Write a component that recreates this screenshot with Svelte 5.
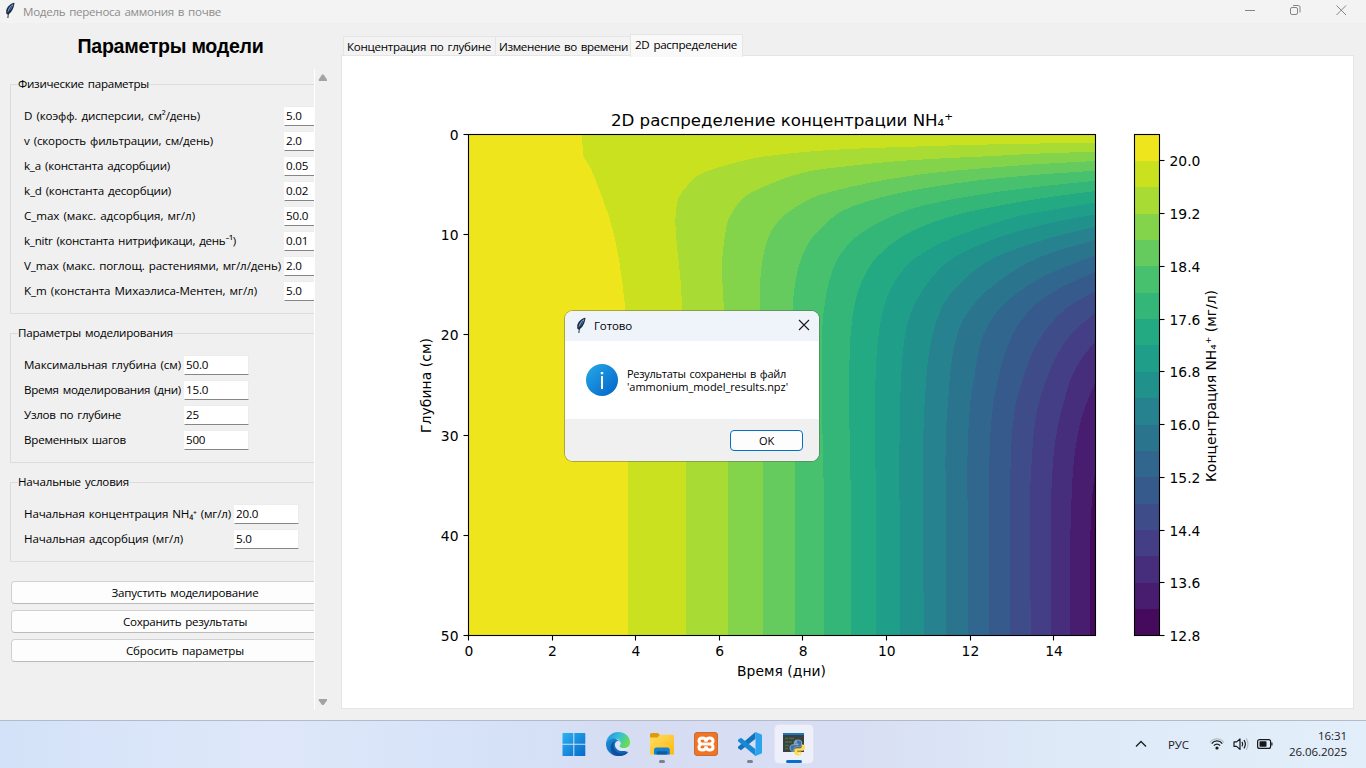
<script>
  // Stretches or tightens letter spacing so a label takes up the given width.
  function fit(node, width) {
    const range = document.createRange();
    range.selectNodeContents(node);
    const w = range.getBoundingClientRect().width;
    const n = node.textContent.trim().length;
    node.style.letterSpacing = (width - w) / n + 'px';
  }

  const groups = [
    {
      title: 'Физические параметры', tw: 131, col: 260,
      rows: [
        ['D (коэфф. дисперсии, см²/день)', '5.0', 176],
        ['v (скорость фильтрации, см/день)', '2.0', 189],
        ['k_a (константа адсорбции)', '0.05', 146],
        ['k_d (константа десорбции)', '0.02', 147],
        ['C_max (макс. адсорбция, мг/л)', '50.0', 171],
        ['k_nitr (константа нитрификаци, день⁻¹)', '0.01', 212],
        ['V_max (макс. поглощ. растениями, мг/л/день)', '2.0', 257],
        ['K_m (константа Михаэлиса-Ментен, мг/л)', '5.0', 233]
      ]
    },
    {
      title: 'Параметры моделирования', tw: 155, col: 160,
      rows: [
        ['Максимальная глубина (см)', '50.0', 157],
        ['Время моделирования (дни)', '15.0', 157],
        ['Узлов по глубине', '25', 97],
        ['Временных шагов', '500', 102]
      ]
    },
    {
      title: 'Начальные условия', tw: 111, col: 210,
      rows: [
        ['Начальная концентрация NH₄⁺ (мг/л)', '20.0', 207],
        ['Начальная адсорбция (мг/л)', '5.0', 159]
      ]
    }
  ];
  const actions = [
    ['Запустить моделирование', 147],
    ['Сохранить результаты', 124],
    ['Сбросить параметры', 118]
  ];
  const tabs = [
    ['Концентрация по глубине', 144, 152],
    ['Изменение во времени', 129, 136],
    ['2D распределение', 102, 113]
  ];

  const colors = ['#efe51c', '#cae11f', '#a8db34', '#84d44b', '#65cb5e', '#48c16e', '#34b679', '#24aa83', '#1f9e89', '#21918c', '#26828e', '#2b748e', '#31678e', '#375a8c', '#3e4c8a', '#433e85', '#472e7c', '#481d6f', '#460a5d'];

  // Iso-lines of concentration, 20.0 down to 13.2 in steps of 0.4.
  const iso = [
    '582,134 583,155.4 590,167 594,176 602,197 609.5,218 615,239 619,260 622,280 624.5,301 626,322 627,364 628,420 628,636',
    '1096,142.7 1040,143.5 967,145 910,146.7 848,149 810,151.5 780,154.5 755,158 736,162.5 715,168.5 697,176 687,186 678.5,198 675.5,218 676.3,239 678.5,260 680.5,280 682,305 684,345 685.5,410 686,636',
    '1096,151.7 1040,153.5 993,156 940,158.5 887,162 845,166.5 813,170.5 793,175.5 780,180 760,188.5 743,198 729,218 724.5,239 722.3,260 722.3,280 724,310 726,360 728,440 728,636',
    '1096,161 1040,164 980,168.5 932,173 890,179 850,187 830,192 813,197.5 796,207 780,219 768,238 762.5,260 760.3,280 760,310 761,370 762.5,450 763,636',
    '1096,170.7 1040,174.5 977,180.5 935,186.5 895,194 865,202 842,211 832,218 812,238 801,259 795.5,281 793,302 792.6,330 793.3,380 795,450 795,636',
    '1096,180.7 1040,186.5 980,194.5 925,205 890,217 856,237 838,258 829.5,280 825,302 822.5,325 821.7,360 822,400 823,460 824,500 824,636',
    '1096,191 1040,198.5 985,208.5 945,218 903,236 876,258 862,281 855,303 851,330 849.5,360 849,400 850,450 851,516 851,636',
    '1096,202.3 1045,211 1013,217.5 952,238 914,259 895,281 885,303 879,331 876,366 875,410 875.3,465 876,480 876,636',
    '1096,214.3 1050,223 997,238 953,258 930,280 915,303 907,325 903,350 901,380 899.7,420 899.5,500 900,636',
    '1096,226.7 1050,238 993,258.5 962,281 944,303 934,329 928,360 925.5,390 923.5,430 923,530 924,636',
    '1096,239.7 1040,257 1000,280 975,303 962,322 955,343 951,365 948.5,395 946,430 945.5,470 946,636',
    '1096,255 1060,269 1035,281 1005,303 989,323 980,345 974,378 970,405 968,440 967,490 968.3,510 968.3,636',
    '1096,271.7 1063,286.5 1037,303 1019,323 1006,350 998,380 993,405 990,440 989,495 989,636',
    '1096,291 1068,307 1047,328 1032,353 1022,382 1015,408 1011,450 1010,510 1010,636',
    '1096,312.3 1073,332 1058,353 1047,378 1037,410 1032,453 1030,510 1030.7,620 1030.7,636',
    '1096,340.7 1082,358 1071,378 1065,398 1058,425 1053,460 1051,510 1051,636',
    '1096,381 1085,407 1078,433 1073,470 1071,515 1070,553 1070,636',
    '1096,466 1092.5,493 1090.7,525 1090,550 1090,636'
  ];

  // Closed region to the right of an iso-line, drawn with a smooth curve.
  function region(src, i) {
    const p = src.split(' ').map((s) => s.split(',').map(Number));
    if (i === 0) return 'M' + p.map((q) => q.join(' ')).join('L') + 'L1096 636L1096 134Z';
    const dir = p.map((_, k) => {
      const a = p[Math.max(0, k - 1)], b = p[Math.min(p.length - 1, k + 1)];
      const l = Math.hypot(b[0] - a[0], b[1] - a[1]);
      return [(b[0] - a[0]) / l, (b[1] - a[1]) / l];
    });
    let d = 'M' + p[0].join(' ');
    for (let k = 1; k < p.length; k++) {
      const a = p[k - 1], b = p[k];
      const l = Math.hypot(b[0] - a[0], b[1] - a[1]) / 3;
      d += `C${a[0] + dir[k - 1][0] * l} ${a[1] + dir[k - 1][1] * l} ${b[0] - dir[k][0] * l} ${b[1] - dir[k][1] * l} ${b[0]} ${b[1]}`;
    }
    return d + 'L1096 636Z';
  }
  const xTicks = [0, 2, 4, 6, 8, 10, 12, 14];
  const yTicks = [0, 10, 20, 30, 40, 50];
  const cTicks = ['12.8', '13.6', '14.4', '15.2', '16.0', '16.8', '17.6', '18.4', '19.2', '20.0'];
  const step = 501 / 19;
</script>

{#snippet feather()}
  <svg class="feather" width="12" height="17" viewBox="0 0 12 17">
    <path d="M10.500 .8C7 1 3.200 4.500 2.300 8.300L2.200 11.500l1.800 1.300C7.400 10.700 9.900 6.400 10.500.8z" fill="#1d2a3d" />
    <path d="M9.300 2C6.800 3 4 6.200 3.500 10.600 6.700 8.400 8.800 5 9.300 2z" fill="#78a5e8" />
    <path d="M7.800 4.200C6 7 4.300 9.500 3.900 16" fill="none" stroke="#1b2a44" stroke-width="1" />
  </svg>
{/snippet}

<div class="screen">
  <header class="titlebar">
    {@render feather()}
    <span class="wtitle"><span use:fit={198}>Модель переноса аммония в почве</span></span>
    <svg class="winctl" width="106" height="20" viewBox="0 0 106 20" fill="none" stroke="#858585">
      <path d="M3 10.5h10" />
      <rect x="48.500" y="7.500" width="7" height="7" rx="1.500" />
      <path d="M51 5.500h5.300q1.700 0 1.700 1.700v5.300" />
      <path d="M94.500 5.500l9.500 9.500M104 5.500l-9.500 9.500" />
    </svg>
  </header>

  <main>
    <aside>
      <h1><span use:fit={186}>Параметры модели</span></h1>
      <div class="scroller">
        <div class="form">
          {#each groups as g}
            <section class="group">
              <div class="legend"><span use:fit={g.tw}>{g.title}</span></div>
              <div class="rows">
                {#each g.rows as [label, value, w]}
                  <div class="row" style="grid-template-columns: {g.col}px 65px">
                    <label><span use:fit={w}>{label}</span></label>
                    <div class="entry"><span use:fit={value.length * 6.4 - (value.includes('.') ? 3.4 : 0)}>{value}</span></div>
                  </div>
                {/each}
              </div>
            </section>
          {/each}
          <div class="actions">
            {#each actions as [text, w]}
              <button><span use:fit={w}>{text}</span></button>
            {/each}
          </div>
        </div>
        <div class="bar">
          <svg width="10" height="8" viewBox="0 0 10 8"><path d="M4 .6h1.600L9 5.600V7H.8V5.600z" fill="#a3a3a3" /></svg>
          <svg width="10" height="8" viewBox="0 0 10 8"><path d="M.8 1H9v1.400L5.600 7H4L.8 2.400z" fill="#a3a3a3" /></svg>
        </div>
      </div>
    </aside>

    <section class="notebook">
      <nav>
        {#each tabs as [t, w, box], i}
          <div class="tab" class:active={i === 2} style="width: {box}px"><span use:fit={w}>{t}</span></div>
        {/each}
      </nav>
      <div class="page">
        <svg class="chart" width="1011" height="652" viewBox="342 56 1011 652">
          <g shape-rendering="crispEdges">
            <rect x="468" y="134" width="628" height="502" fill={colors[0]} />
            {#each iso as pts, i}
              <path d={region(pts, i)} fill={colors[i + 1]} />
            {/each}
            {#each colors as c, i}
              <rect x="1134" y={134.5 + i * step} width="26" height={i === 18 ? step : step + 0.5} fill={c} />
            {/each}
          </g>
          <g fill="none" stroke="#000" stroke-width="1.1">
            <rect x="468.500" y="134.500" width="627" height="501" />
            <rect x="1134.500" y="134.500" width="25" height="501" />
            {#each xTicks as t}
              <path d="M{Math.round(468 + t * 41.8) + 0.5} 635.5v5" />
            {/each}
            {#each yTicks as t}
              <path d="M468.5 {Math.round(134 + t * 10.02) + 0.5}h-5" />
            {/each}
            {#each cTicks as _, i}
              <path d="M1159.5 {Math.round(635 - i * step * 2) + 0.5}h5" />
            {/each}
          </g>
          <g class="num">
            {#each xTicks as t}
              <text x={468.8 + t * 41.8} y="656" text-anchor="middle">{t}</text>
            {/each}
            {#each yTicks as t}
              <text x="458.500" y={140 + t * 10.02} text-anchor="end">{t}</text>
            {/each}
            {#each cTicks as t, i}
              <text x="1169.500" y={641 - i * step * 2}>{t}</text>
            {/each}
            <text x="737" y="676" textLength="89">Время (дни)</text>
            <text transform="translate(431 433) rotate(-90)" textLength="95">Глубина (см)</text>
            <text transform="translate(1216 482) rotate(-90)" textLength="192">Концентрация NH₄⁺ (мг/л)</text>
            <text class="big" x="611" y="126" textLength="342">2D распределение концентрации NH₄⁺</text>
          </g>
        </svg>
      </div>
    </section>
  </main>

  <footer class="taskbar">
    <div class="apps">
      <div class="app">
        <svg width="24" height="24" viewBox="0 0 24 24">
          <defs><linearGradient id="win" x1="0" y1="0" x2="1" y2="1"><stop offset="0" stop-color="#2bb3f3" /><stop offset="1" stop-color="#0669c9" /></linearGradient></defs>
          <path d="M.5 1.500Q.5 1 1 1h10.300v10.800H.5zM12.300 1h10.400q.6 0 .6.6v10.200h-11zM.5 12.800h10.800V24H1q-.5 0-.5-.6zM12.300 12.800h11v10.600q0 .6-.6.6H12.300z" fill="url(#win)" />
        </svg>
      </div>
      <div class="app">
        <svg width="24" height="24" viewBox="0 0 24 24">
          <defs>
            <linearGradient id="e1" x1="0" y1="0" x2="1" y2=".4"><stop offset="0" stop-color="#2488d8" /><stop offset=".55" stop-color="#35bfdc" /><stop offset="1" stop-color="#66dd57" /></linearGradient>
            <linearGradient id="e2" x1="0" y1="0" x2="1" y2="1"><stop offset="0" stop-color="#1a8fdc" /><stop offset="1" stop-color="#0a56a8" /></linearGradient>
          </defs>
          <path d="M0 12C0 8 5 5 9 6l5 4-2 7 10 3c-2.300 2.700-6 4-10 4A12 12 0 0 1 0 12z" fill="url(#e2)" />
          <path d="M.1 11C1 4 6.200 0 12 0c7 0 12 4.700 12 10.200 0 4-3 6-6.300 6-2.700 0-4.200-.9-4.200-1.900 0-.8 1.100-1.200 1.100-3C14.600 8.700 12 6.500 8.600 6.500 4.500 6.500 1.300 8.400.1 11z" fill="url(#e1)" />
          <path d="M9.300 8.800C6.900 11 6.800 15.500 9.500 18.700c2.500 3 7.300 3.600 12.900 1.200-2.300 2.900-6.200 4.300-10.400 4.100C6.500 23.600 4.500 18.500 4.800 15c.2-3 2-5.200 4.500-6.200z" fill="#11509c" />
          <path d="M14.600 11.400c0-1.300-1-2.400-2.500-2.400-1.900 0-3.300 1.700-3.200 4 .2 3.700 3.700 6.100 7.500 6.100 2.400 0 4.600-.6 5.700-1.800l1-1.400c.2-.7-.5-1-1.600-.4-1.200.5-2.500.7-3.800.7-2.700 0-4.200-1.200-4.200-2.200 0-.8 1.100-1.400 1.100-2.600z" fill="#dde6f6" />
        </svg>
      </div>
      <div class="app">
        <svg width="24" height="24" viewBox="0 0 24 24">
          <defs><linearGradient id="fo" x1="0" y1="0" x2="1" y2="1"><stop offset="0" stop-color="#ffdd66" /><stop offset="1" stop-color="#ffb90d" /></linearGradient></defs>
          <path d="M0 7V2.600Q0 1 1.600 1h6.200L10.500 3.400H22v4z" fill="#dc9c0b" />
          <path d="M0 5.500h7.500L10 2.800h12.600Q24 2.800 24 4.200v18.300H1.300Q0 22.500 0 21z" fill="url(#fo)" />
          <path d="M4 22.600v-4.500Q4 15.500 6.600 15.500h10.600q2.600 0 2.600 2.600v4.500z" fill="#1680d0" />
          <path d="M7.500 19.200h9q.8 0 .8.800v2.600H6.700V20q0-.8.8-.8z" fill="#0b5ba4" />
        </svg>
        <i class="dot"></i>
      </div>
      <div class="app">
        <svg width="24" height="24" viewBox="0 0 24 24">
          <rect x=".5" y=".5" width="23" height="23" rx="2.500" fill="#ee7525" stroke="#c96a35" />
          <g fill="none" stroke="#fff" stroke-width="3" stroke-linejoin="round">
            <path d="M12 9.500C12 7 10.500 6 8.300 6S5 7.200 5 9c0 1.700 1 2.600 2.600 3C6 12.400 5 13.400 5 15.200 5 17 6.200 18 8.300 18s3.700-1.200 3.700-3.600" />
            <path d="M12 9.500C12 7 13.500 6 15.700 6S19 7.200 19 9c0 1.700-1 2.600-2.600 3 1.600.4 2.600 1.400 2.600 3.200 0 1.800-1.200 2.800-3.300 2.800S12 16.800 12 14.400M8.500 12h7" />
          </g>
        </svg>
      </div>
      <div class="app">
        <svg width="24" height="24" viewBox="0 0 24 24">
          <path d="M17.500 0v6.800L3 18.300 0 16.200v-1.400z" fill="#1173ba" />
          <path d="M17.500 24v-6.800L3 5.700 0 7.800v1.400z" fill="#1888d5" />
          <path d="M17.500 0L24 2.800v18.400L17.500 24l-1.200-1.500 1.200-.8z" fill="#2ba3ee" />
        </svg>
        <i class="dot"></i>
      </div>
      <div class="app current">
        <svg width="24" height="24" viewBox="0 0 24 24">
          <path d="M1 1h21v19H1z" fill="#3c3f40" />
          <path d="M1 1h21v2H1z" fill="#1b78b8" />
          <path d="M3 6.500h3M7 6.500h5M3 10h7M3 13.500h4M3 16.500h3" stroke="#3f7240" stroke-width="1.300" />
          <path d="M15.500 8c-2.600 0-3.300 1-3.300 2.300V12h4v.7h-5.500C9 12.700 8 14 8 16s1 3.300 2.500 3.300h1.600v-2c0-1.300 1-2.300 2.300-2.300h3.400c1 0 1.800-.8 1.800-1.800v-3C19.600 8.800 18.300 8 15.500 8z" fill="#3776ab" stroke="#e8ecf2" stroke-width=".5" />
          <path d="M16 23.500c2.600 0 3.300-1 3.300-2.300v-1.700h-4v-.7h5.200c1.700 0 2.500-1.300 2.500-3.200s-.8-3-2.300-3h-.9v1.600c0 1.300-1 2.100-2.200 2.100h-3.300c-1 0-1.900.8-1.900 1.800v3c0 1.600 1.500 2.400 3.600 2.400z" fill="#ffdc52" />
          <circle cx="14" cy="10" r=".7" fill="#fff" /><circle cx="17.700" cy="21.500" r=".7" fill="#fff" />
        </svg>
        <i class="dot wide"></i>
      </div>
    </div>
    <div class="tray">
      <svg width="12" height="8" viewBox="0 0 12 8" fill="none" stroke="#1d2126" stroke-width="1.400"><path d="M1 6.500L6 1.500l5 5" /></svg>
      <span class="lang"><span use:fit={21}>РУС</span></span>
      <svg width="64" height="16" viewBox="0 0 64 16" fill="none" stroke="#15191d" stroke-width="1.200">
        <path d="M1 6.500C4.500 1.700 11.500 1.700 15 6.500" stroke="#b4bec9" />
        <path d="M2.700 7.600c2.800-3.600 7.800-3.600 10.600 0M4.900 9.700c1.700-2.200 4.500-2.200 6.200 0" />
        <circle cx="8" cy="12" r="1.600" fill="#15191d" stroke="none" />
        <path d="M25 5.900h2.600L31 3v10.400L27.600 10.400H25z" stroke-linejoin="round" />
        <path d="M33 5.800q1.500 2.300 0 4.600M35 4q2.800 4.100 0 8.300" />
        <path d="M37.200 2.400q3.600 5.600 0 11.600" stroke="#b4bec9" />
        <rect x="48.600" y="3.600" width="13" height="8.800" rx="2" />
        <path d="M62.300 6.500h1.200v3h-1.200z" fill="#15191d" stroke="none" />
        <rect x="50.500" y="5.300" width="7" height="5.500" rx=".8" fill="#15191d" stroke="none" />
      </svg>
      <div class="clock"><div><span use:fit={29}>16:31</span></div><div><span use:fit={58}>26.06.2025</span></div></div>
    </div>
  </footer>

  <div class="dialog">
    <div class="dhead">
      {@render feather()}
      <span class="dtitle"><span use:fit={38}>Готово</span></span>
      <svg width="12" height="12" viewBox="0 0 12 12" stroke="#1a1a1a" stroke-width="1.100"><path d="M1 1l10 10M11 1L1 11" /></svg>
    </div>
    <div class="dbody">
      <svg width="32" height="32" viewBox="0 0 32 32">
        <defs><linearGradient id="inf" x1=".1" y1=".1" x2=".9" y2=".9"><stop offset="0" stop-color="#22a3e6" /><stop offset="1" stop-color="#0669cb" /></linearGradient></defs>
        <circle cx="16" cy="16" r="16" fill="url(#inf)" />
        <path d="M15 12h2v13h-2zM14.800 8h2.400v2.300h-2.400z" fill="#fff" />
      </svg>
      <div class="msg">
        <div><span use:fit={159}>Результаты сохранены в файл</span></div>
        <div><span use:fit={161}>'ammonium_model_results.npz'</span></div>
      </div>
    </div>
    <div class="dfoot"><div class="ok"><span use:fit={15}>OK</span></div></div>
  </div>
</div>

<style>
  :global(body) { margin: 0; overflow: hidden; }
  .screen {
    position: relative; width: 1366px; height: 768px; box-sizing: border-box;
    display: grid; grid-template-rows: 23px 697px 48px;
    background: #f0f0f0; color: #000; overflow: hidden;
    font: 11.6px/16px "Open Sans", "Noto Sans", sans-serif;
  }
  span { white-space: nowrap; word-spacing: 1.2px; }
  svg { display: block; flex: none; }
  .titlebar { display: flex; align-items: flex-start; background: #f3f3f3; padding: 2px 18px 0 4px; }
  .wtitle { margin: 2px auto 0 7px; color: #8d8d8d; }
  .winctl { margin-top: -2px; }

  main { display: flex; }
  aside { width: 341px; display: flex; flex-direction: column; }
  h1 { margin: 12px 0 0; height: 34px; line-height: 23px; text-align: center; font-family: "Liberation Sans", Arial, sans-serif; font-size: 19.6px; font-weight: bold; }
  h1 span { word-spacing: 0; }
  .scroller { display: flex; height: 641px; }
  .form { flex: none; width: 304px; padding: 15px 0 0 10px; overflow: hidden; border-right: 1px solid #fff; }
  .group { width: 349px; box-sizing: border-box; border: 1px solid #dcdcdc; margin-bottom: 19px; padding: 0 0 12px 13px; }
  .legend { display: table; margin: -9px 0 0 -6px; height: 16px; background: #f0f0f0; }
  .rows { display: grid; gap: 5px; padding-top: 14px; }
  .row { display: grid; height: 20px; }
  .row label { padding-top: 2px; }
  .entry { box-sizing: border-box; height: 20px; background: #fff; border: 1px solid #ececec; border-left-color: #fff; border-bottom-color: #868686; border-radius: 1px; padding: 1px 0 0 1px; }
  .actions { display: grid; gap: 6px; padding-left: 1px; width: 348px; }
  button { height: 23px; box-sizing: border-box; padding: 0; background: #fdfdfd; border: 1px solid #d0d0d0; border-bottom-color: #bababa; border-radius: 4px; font: inherit; color: #000; }
  .bar { width: 23px; padding: 5px 0 4px 3px; display: flex; flex-direction: column; justify-content: space-between; }

  .notebook { width: 1013px; display: flex; flex-direction: column; }
  nav { display: flex; height: 33px; align-items: flex-end; padding-left: 2px; box-sizing: border-box; }
  .tab { box-sizing: border-box; height: 21px; border: 1px solid #e5e5e5; border-bottom: 0; background: #f3f3f3; padding: 2px 0 0 3px; margin-bottom: -1px; border-right: 0; }
  .tab.active { height: 23px; background: #f9f9f9; border-right: 1px solid #e5e5e5; padding: 2px 0 0 4px; margin-left: -1px; z-index: 1; }
  .page { border: 1px solid #e5e5e5; background: #fff; height: 652px; margin-top: -1px; }
  .num { font-family: "DejaVu Sans", sans-serif; font-size: 13.89px; fill: #000; }
  .big { font-size: 16.67px; }

  .taskbar { box-sizing: border-box; border-top: 1px solid #b3bac9; display: grid; grid-template-columns: 553px 1fr auto; background: linear-gradient(90deg, #d3e2f8 0, #dfe8fa 20%, #d5e2f8 35%, #d6dcf2 47%, #d8def3 62%, #deeaf8 78%, #e2eef9 100%); }
  .apps { grid-column: 2; display: flex; gap: 6px; padding-top: 4px; }
  .app { width: 38px; height: 38px; box-sizing: border-box; padding: 7px 0 0 7px; border-radius: 4px; position: relative; margin-left: 2px; margin-right: -2px; }
  .app.current { background: #edf0fa; box-shadow: 0 0 0 1px #e0e4f0; }
  .dot { position: absolute; left: 16px; bottom: 0; width: 6px; height: 3px; border-radius: 2px; background: #7c818c; }
  .dot.wide { left: 11px; width: 16px; background: #0a6cce; }
  .tray { display: flex; align-items: center; padding: 0 19px 2px 0; color: #1c2025; font-size: 11.5px; }
  .lang { margin: 2px 20px 0 21px; }
  .clock { margin-left: 14px; width: 60px; text-align: right; }

  .dialog { position: absolute; left: 565px; top: 311px; width: 254px; height: 150px; border-radius: 8px; overflow: hidden; box-shadow: 0 0 0 1px rgba(90, 90, 90, .45); display: grid; grid-template-rows: 30px 78px 42px; background: #fff; }
  .dhead { display: flex; align-items: center; background: #eff3fa; padding: 0 9px 2px 10px; }
  .dtitle { margin: 1px auto 0 7px; font-size: 11.5px; }
  .dbody { display: flex; padding: 23px 0 0 21px; }
  .msg { margin: 3px 0 0 9px; font-size: 11px; line-height: 13px; }
  .dfoot { background: #f0f0f0; display: flex; justify-content: flex-end; padding: 11px 16px 0 0; }
  .ok { box-sizing: border-box; width: 73px; height: 21px; border: 1px solid #0071c9; border-radius: 4px; background: #fdfdfd; text-align: center; line-height: 20px; font-size: 11px; }
</style>
